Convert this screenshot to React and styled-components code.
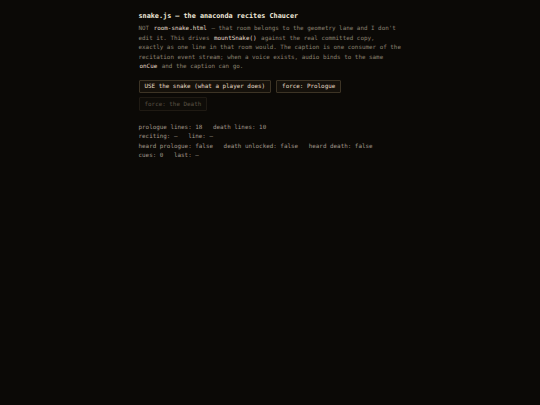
import React from "react";
import styled, { createGlobalStyle } from "styled-components";

const GlobalStyle = createGlobalStyle`
  html, body {
    margin: 0;
    padding: 0;
    background: #0b0906;
  }
  body {
    font-family: "DejaVu Sans Mono", "Liberation Mono", monospace;
    min-height: 405px;
  }
`;

const Page = styled.div`
  width: 264px;
  margin: 0 auto;
  padding-top: 11px;
  padding-left: 1px;
`;

const Title = styled.h1`
  margin: 0 0 3px;
  font-size: 6.8px;
  font-weight: 700;
  color: #f0e9dc;
  line-height: 10px;
`;

const Intro = styled.p`
  width: 263.5px;
  margin: 0 0 8px;
  font-size: 5.9px;
  line-height: 9.6px;
  color: #8c8271;
`;

const Code = styled.code`
  font-family: inherit;
  padding: 0 1px;
  color: #e8dfcd;
`;

const Buttons = styled.div`
  display: flex;
  flex-wrap: wrap;
  gap: 4px 5px;
  width: 220px;
  margin-bottom: 12px;
`;

const Button = styled.button`
  font-family: inherit;
  font-size: 5.9px;
  line-height: 8.5px;
  padding: 1.5px 5px;
  border-radius: 1px;
  border: 1px solid ${(p) => (p.$disabled ? "#1f1a13" : "#3d3425")};
  background: ${(p) => (p.$disabled ? "#0e0c08" : "#15110b")};
  color: ${(p) => (p.$disabled ? "#5a5245" : "#e6dcc6")};
  cursor: ${(p) => (p.$disabled ? "default" : "pointer")};
`;

const Status = styled.div`
  font-size: 5.9px;
  line-height: 9.3px;
  color: #a1978a;
  white-space: pre;
`;

export default function App() {
  return (
    <>
      <GlobalStyle />
      <Page>
        <Title>snake.js — the anaconda recites Chaucer</Title>
        <Intro>
          NOT <Code>room-snake.html</Code> — that room belongs to the geometry
          lane and I don't edit it. This drives <Code>mountSnake()</Code>{" "}
          against the real committed copy, exactly as one line in that room
          would. The caption is one consumer of the recitation event stream;
          when a voice exists, audio binds to the same <Code>onCue</Code> and
          the caption can go.
        </Intro>
        <Buttons>
          <Button>USE the snake (what a player does)</Button>
          <Button>force: Prologue</Button>
          <Button $disabled disabled>
            force: the Death
          </Button>
        </Buttons>
        <Status>{"prologue lines: 18   death lines: 10"}</Status>
        <Status>{"reciting: —   line: —"}</Status>
        <Status>
          {"heard prologue: false   death unlocked: false   heard death: false"}
        </Status>
        <Status>{"cues: 0   last: —"}</Status>
      </Page>
    </>
  );
}
